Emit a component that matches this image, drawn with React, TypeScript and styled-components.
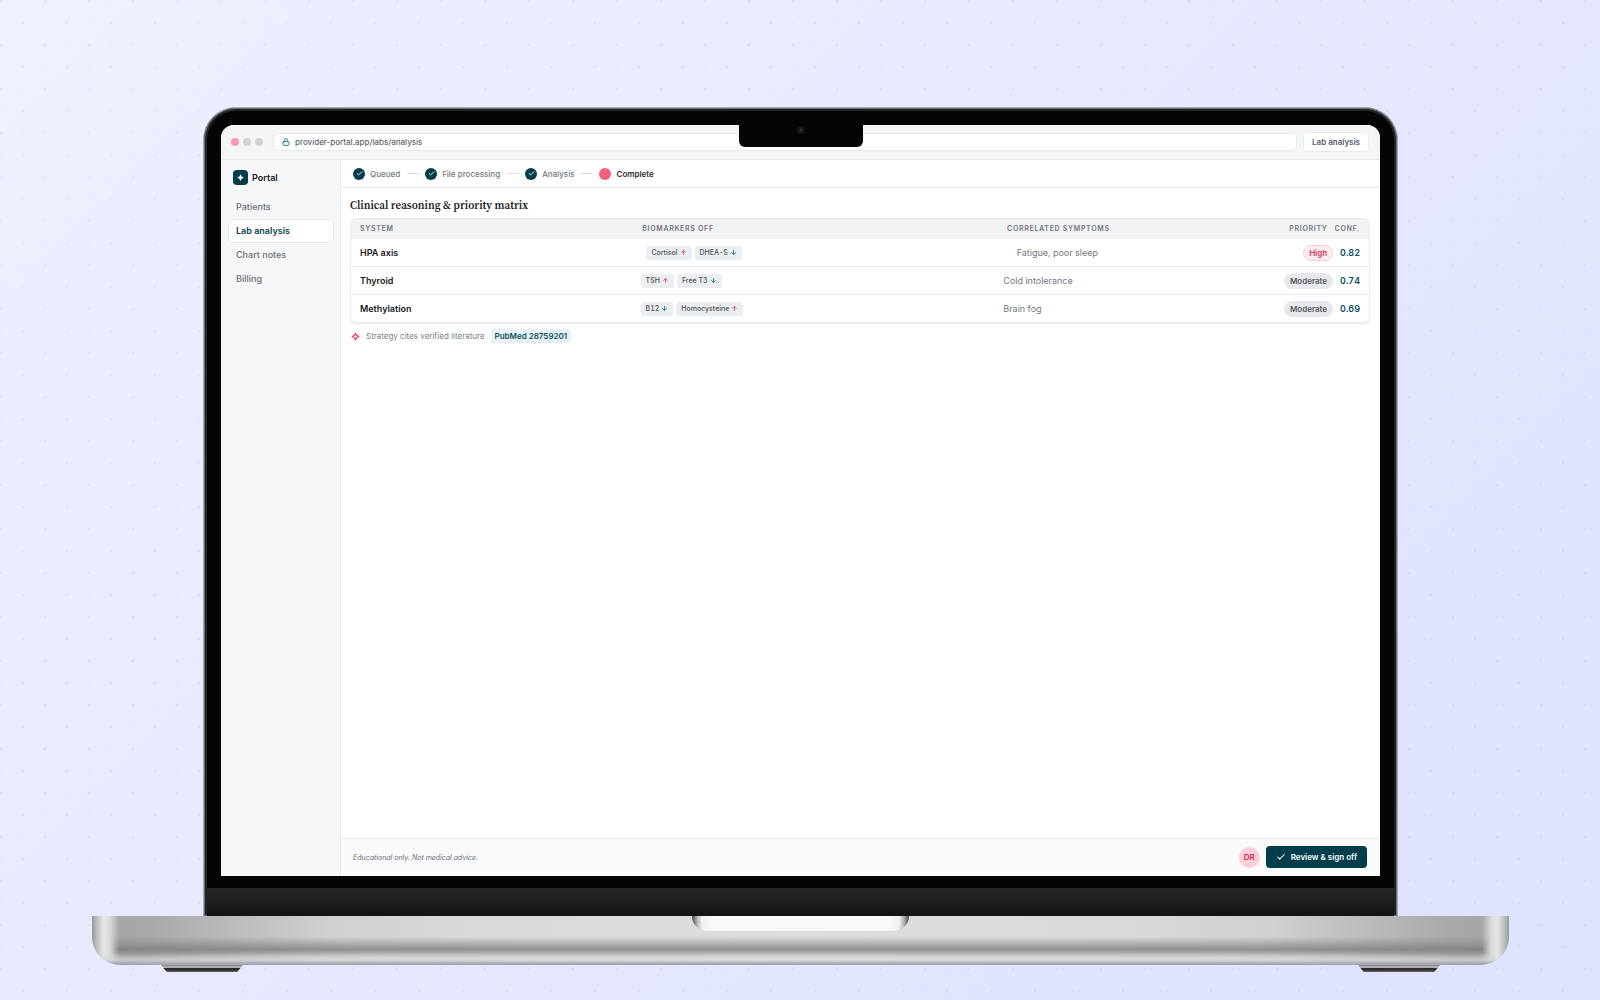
import React from "react";
import styled, { createGlobalStyle } from "styled-components";
import { ArrowDown, ArrowUp, Check, Lock } from "lucide-react";

const GlobalStyle = createGlobalStyle`
  *, *::before, *::after { box-sizing: border-box; }
  body {
    margin: 0;
    font-family: Inter, "Liberation Sans", sans-serif;
    color: #17191c;
    -webkit-font-smoothing: antialiased;
  }
  button, input { font: inherit; color: inherit; }
`;

const Stage = styled.div`
  min-height: 100vh;
  display: flex;
  flex-direction: column;
  padding: 107px 91px 28px 92px;
  background:
    radial-gradient(circle, rgba(96, 100, 130, 0.06) 1px, transparent 2px) -21px -21px / 44px 44px,
    radial-gradient(circle, rgba(96, 100, 130, 0.06) 1px, transparent 2px) 1px 1px / 44px 44px,
    radial-gradient(circle, rgba(96, 100, 130, 0.02) 1px, transparent 2px) -10px -10px / 22px 22px,
    linear-gradient(135deg, #eef1ff 0%, #e6e8ff 50%, #dee2ff 100%);
`;

const Lid = styled.div`
  flex: 1;
  display: flex;
  flex-direction: column;
  margin: 0 111px;
  border: 1px solid #a9aaad;
  border-bottom: 0;
  border-radius: 33px 33px 0 0;
  background: #050505;
  box-shadow: inset 0 0 0 1px #6c6d6f, inset 0 0 0 3px #222324;
  overflow: hidden;
`;

const Bezel = styled.div`
  flex: 1;
  display: flex;
  position: relative;
  padding: 17px 17px 12px;
`;

const Chin = styled.div`
  height: 28px;
  margin: 0 3px;
  background: linear-gradient(#262626, #131313);
`;

const Notch = styled.div`
  position: absolute;
  top: 16px;
  left: 50%;
  width: 124px;
  height: 23px;
  transform: translateX(-50%);
  display: flex;
  justify-content: center;
  padding-top: 2px;
  background: #050505;
  border-radius: 0 0 6px 6px;
`;

const Camera = styled.span`
  width: 8px;
  height: 8px;
  border-radius: 50%;
  background: radial-gradient(circle, #2c2f38 0 1px, #131417 2px 100%);
`;

const Screen = styled.div`
  flex: 1;
  display: flex;
  flex-direction: column;
  border-radius: 13px 13px 0 0;
  background: #ffffff;
  overflow: hidden;
`;

const BrowserBar = styled.header`
  display: flex;
  align-items: center;
  gap: 6px;
  height: 35px;
  padding: 0 11px 0 10px;
  background: #f3f5f6;
  border-bottom: 1px solid #e6e9eb;
`;

const Lights = styled.div`
  display: flex;
  gap: 4px;
  margin-right: 4px;
`;

const Light = styled.span<{ $color: string }>`
  width: 8px;
  height: 8px;
  border-radius: 50%;
  background: ${(p) => p.$color};
`;

const Address = styled.label`
  flex: 1;
  display: flex;
  align-items: center;
  gap: 5px;
  height: 18px;
  padding: 0 8px;
  background: #fff;
  border: 1px solid #e8ebed;
  border-radius: 5px;
  color: #2a7f8a;
`;

const AddressInput = styled.input`
  flex: 1;
  min-width: 0;
  padding: 0;
  border: 0;
  outline: 0;
  background: transparent;
  color: #62666c;
  font-size: 8px;
  font-weight: 500;
  line-height: 12px;
`;

const TabButton = styled.button`
  height: 20px;
  padding: 0 8px;
  background: #fff;
  border: 1px solid #e8ebed;
  border-radius: 5px;
  color: #55595f;
  font-size: 8px;
  font-weight: 600;
`;

const Workspace = styled.div`
  flex: 1;
  display: flex;
`;

const Sidebar = styled.aside`
  width: 120px;
  padding: 9px 6px 9px 7px;
  background: #f6f7f9;
  border-right: 1px solid #e9ebee;
`;

const Brand = styled.div`
  display: flex;
  align-items: center;
  gap: 4px;
  height: 16px;
  padding: 0 5px;
  margin-bottom: 10px;
  font-size: 9px;
  font-weight: 600;
`;

const BrandMark = styled.span`
  display: grid;
  place-items: center;
  width: 15px;
  height: 15px;
  border-radius: 4px;
  background: #003e4c;
`;

const Nav = styled.nav`
  display: grid;
`;

const NavLink = styled.a<{ $active?: boolean }>`
  height: 24px;
  padding: 0 7px;
  border: 1px solid ${(p) => (p.$active ? "#e6e9ec" : "transparent")};
  border-radius: 5px;
  background: ${(p) => (p.$active ? "#fff" : "transparent")};
  color: ${(p) => (p.$active ? "#0b3f50" : "#6a6e74")};
  font-size: 9px;
  font-weight: ${(p) => (p.$active ? 600 : 500)};
  line-height: 22px;
  text-decoration: none;
`;

const Main = styled.main`
  flex: 1;
  min-width: 0;
  display: flex;
  flex-direction: column;
`;

const Stepper = styled.ol`
  display: flex;
  align-items: center;
  gap: 7px;
  height: 28px;
  margin: 0;
  padding: 0 12px;
  list-style: none;
  border-bottom: 1px solid #e6e8eb;
`;

const Step = styled.li<{ $current?: boolean }>`
  display: flex;
  align-items: center;
  gap: 5px;
  color: ${(p) => (p.$current ? "#2b2e33" : "#74787e")};
  font-size: 8px;
  font-weight: ${(p) => (p.$current ? 600 : 500)};

  li + &::before {
    content: "";
    width: 12px;
    height: 1px;
    margin-right: 1px;
    background: #dcdfe2;
  }
`;

const StepDot = styled.span<{ $current?: boolean }>`
  display: grid;
  place-items: center;
  width: 12px;
  height: 12px;
  border-radius: 50%;
  background: ${(p) => (p.$current ? "#f2607b" : "#003e4c")};
  color: #fff;
`;

const Content = styled.section`
  flex: 1;
  padding: 10px 10px 9px 9px;
`;

const Title = styled.h1`
  margin: 0 0 4px;
  font-family: "Source Serif 4", "Source Serif Pro", "Liberation Serif", serif;
  font-size: 11px;
  font-weight: 600;
  line-height: 16px;
`;

const Matrix = styled.table`
  display: block;
  width: 100%;
  border: 1px solid #e8eaed;
  border-bottom-width: 2px;
  border-radius: 6px;
  overflow: hidden;

  thead, tbody { display: block; }
`;

const MatrixRow = styled.tr<{ $head?: boolean }>`
  display: grid;
  grid-template-columns: 1fr 1.3fr 1fr auto auto;
  align-items: center;
  gap: 7px;
  height: ${(p) => (p.$head ? 20 : 28)}px;
  padding: 0 9px;
  background: ${(p) => (p.$head ? "#f1f2f4" : "#fff")};

  tbody & { border-bottom: 1px solid #e8eaed; }
  tbody &:last-child { height: 27px; border-bottom: 0; }
`;

const HeadCell = styled.th`
  padding: 0;
  color: #73777d;
  font-size: 7px;
  font-weight: 600;
  line-height: 10px;
  letter-spacing: 0.1em;
  text-align: left;
  text-transform: uppercase;
`;

const SystemCell = styled.th`
  padding: 0;
  font-size: 9px;
  font-weight: 600;
  text-align: left;
`;

const Cell = styled.td<{ $score?: boolean }>`
  display: flex;
  align-items: center;
  gap: 3px;
  padding: 0;
  color: ${(p) => (p.$score ? "#0b5060" : "#74787e")};
  font-size: 9px;
  font-weight: ${(p) => (p.$score ? 600 : 400)};
  font-variant-numeric: tabular-nums;
`;

const Marker = styled.span<{ $up: boolean }>`
  display: flex;
  align-items: center;
  gap: 2px;
  height: 14px;
  padding: 0 5px;
  border-radius: 3px;
  background: #eceff1;
  color: #4e5257;
  font-size: 7px;
  font-weight: 500;

  svg { color: ${(p) => (p.$up ? "#e8456b" : "#1d7485")}; }
`;

const Priority = styled.span<{ $high: boolean }>`
  height: 16px;
  padding: 0 5px;
  border: 1px solid ${(p) => (p.$high ? "#fbccd6" : "#e6e8eb")};
  border-radius: 8px;
  background: ${(p) => (p.$high ? "#feecf0" : "#e6e8eb")};
  color: ${(p) => (p.$high ? "#d23459" : "#54585f")};
  font-size: 8px;
  font-weight: 600;
  line-height: 14px;
`;

const Citation = styled.p`
  display: flex;
  align-items: center;
  gap: 6px;
  margin: 5px 0 0;
  padding-left: 1px;
  color: #7a7e84;
  font-size: 8px;
  line-height: 14px;
`;

const Reference = styled.a`
  height: 14px;
  padding: 0 4px;
  border-radius: 3px;
  background: #e8f1f5;
  color: #0f5060;
  font-size: 8px;
  font-weight: 600;
  text-decoration: none;
`;

const Footer = styled.footer`
  display: flex;
  align-items: center;
  gap: 6px;
  height: 38px;
  padding: 0 13px 1px 12px;
  background: #fafafb;
  border-top: 1px solid #e6e8eb;
`;

const Disclaimer = styled.em`
  flex: 1;
  color: #6a6e74;
  font-size: 7px;
`;

const Avatar = styled.span`
  display: grid;
  place-items: center;
  width: 21px;
  height: 21px;
  border-radius: 50%;
  background: #fdcfd9;
  color: #d02a50;
  font-size: 8px;
  font-weight: 600;
`;

const SignOff = styled.button`
  display: flex;
  align-items: center;
  gap: 5px;
  height: 22px;
  padding: 0 10px;
  border: 0;
  border-radius: 4px;
  background: #003e4c;
  color: #fff;
  font-size: 8px;
  font-weight: 600;
`;

const Base = styled.div`
  display: flex;
  justify-content: center;
  align-items: flex-start;
  height: 49px;
  border-radius: 0 0 28px 28px;
  background:
    linear-gradient(to bottom, transparent 0 76%, rgba(214, 217, 215, 0.7) 90%, #a2a4ae 98%),
    linear-gradient(to right, #959a98 0, #bcc1bf 5px, #e4e7e6 12px, #d6d9d8 18px, rgba(160, 162, 162, 0) 27px),
    linear-gradient(to left, #959a98 0, #bcc1bf 5px, #e4e7e6 12px, #d6d9d8 18px, rgba(160, 162, 162, 0) 27px),
    linear-gradient(to bottom, transparent 42%, rgba(124, 126, 128, 0.8) 68%, transparent 86%),
    linear-gradient(to right, #a4a6a6 0, #a8aaaa 60px, #d0d2d2 240px, #d9dadb 400px, #dcdddd 50%, #d9dadb calc(100% - 400px), #d0d2d2 calc(100% - 240px), #a8aaaa calc(100% - 60px), #a4a6a6 100%);
`;

const Lip = styled.div`
  width: 217px;
  height: 15px;
  border-radius: 0 0 15px 15px;
  background: linear-gradient(to right, #454646 0, #b0b1b1 5px, #f0f0f0 10px, #f9f9f9 20px, #f9f9f9 calc(100% - 20px), #f0f0f0 calc(100% - 10px), #b0b1b1 calc(100% - 5px), #454646 100%);
`;

const Feet = styled.div`
  display: flex;
  justify-content: space-between;
  height: 7px;
  padding: 0 69px;
`;

const Foot = styled.span`
  width: 82px;
  background: linear-gradient(#85878a, #b8babb 35%, #2c2a2c 50%, #2c2a2c 70%, #6e6c70);
  clip-path: polygon(0 0, 100% 0, 93% 100%, 7% 100%);
`;

const steps = ["Queued", "File processing", "Analysis", "Complete"];
const sections = ["Patients", "Lab analysis", "Chart notes", "Billing"];
const columns = ["System", "Biomarkers off", "Correlated symptoms", "Priority", "Conf."];

const findings = [
  { system: "HPA axis", markers: [["Cortisol", true], ["DHEA-S", false]], symptoms: "Fatigue, poor sleep", priority: "High", score: "0.82" },
  { system: "Thyroid", markers: [["TSH", true], ["Free T3", false]], symptoms: "Cold intolerance", priority: "Moderate", score: "0.74" },
  { system: "Methylation", markers: [["B12", false], ["Homocysteine", true]], symptoms: "Brain fog", priority: "Moderate", score: "0.69" },
] as { system: string; markers: [string, boolean][]; symptoms: string; priority: string; score: string }[];

function StarIcon({ size, filled }: { size: number; filled?: boolean }) {
  return (
    <svg width={size} height={size} viewBox="0 0 16 16" aria-hidden="true">
      <path
        d="M8 2 10 6 14 8 10 10 8 14 6 10 2 8 6 6Z"
        fill={filled ? "#fff" : "none"}
        stroke={filled ? "none" : "#e8456b"}
        strokeWidth={2}
        strokeLinejoin="round"
      />
    </svg>
  );
}

export default function App() {
  return (
    <>
      <GlobalStyle />
      <Stage>
        <Lid>
          <Bezel>
            <Screen>
              <BrowserBar>
                <Lights>
                  <Light $color="#f79bb0" />
                  <Light $color="#d0d3d5" />
                  <Light $color="#d0d3d5" />
                </Lights>
                <Address>
                  <Lock size={8} strokeWidth={3} aria-hidden="true" />
                  <AddressInput aria-label="Address" defaultValue="provider-portal.app/labs/analysis" />
                </Address>
                <TabButton type="button">Lab analysis</TabButton>
              </BrowserBar>
              <Workspace>
                <Sidebar>
                  <Brand>
                    <BrandMark><StarIcon size={9} filled /></BrandMark>
                    Portal
                  </Brand>
                  <Nav>
                    {sections.map((name) => (
                      <NavLink key={name} href="#" $active={name === "Lab analysis"}>{name}</NavLink>
                    ))}
                  </Nav>
                </Sidebar>
                <Main>
                  <Stepper>
                    {steps.map((name) => {
                      const current = name === "Complete";
                      return (
                        <Step key={name} $current={current}>
                          <StepDot $current={current}>
                            {!current && <Check size={7} strokeWidth={3} />}
                          </StepDot>
                          {name}
                        </Step>
                      );
                    })}
                  </Stepper>
                  <Content>
                    <Title>Clinical reasoning &amp; priority matrix</Title>
                    <Matrix>
                      <thead>
                        <MatrixRow $head>
                          {columns.map((name) => (
                            <HeadCell key={name} scope="col">{name}</HeadCell>
                          ))}
                        </MatrixRow>
                      </thead>
                      <tbody>
                        {findings.map((row) => (
                          <MatrixRow key={row.system}>
                            <SystemCell scope="row">{row.system}</SystemCell>
                            <Cell>
                              {row.markers.map(([name, up]) => (
                                <Marker key={name} $up={up}>
                                  {name}
                                  {up ? <ArrowUp size={7} strokeWidth={3} /> : <ArrowDown size={7} strokeWidth={3} />}
                                </Marker>
                              ))}
                            </Cell>
                            <Cell>{row.symptoms}</Cell>
                            <Cell><Priority $high={row.priority === "High"}>{row.priority}</Priority></Cell>
                            <Cell $score>{row.score}</Cell>
                          </MatrixRow>
                        ))}
                      </tbody>
                    </Matrix>
                    <Citation>
                      <StarIcon size={9} />
                      Strategy cites verified literature
                      <Reference href="#">PubMed 28759201</Reference>
                    </Citation>
                  </Content>
                  <Footer>
                    <Disclaimer>Educational only. Not medical advice.</Disclaimer>
                    <Avatar>DR</Avatar>
                    <SignOff type="button">
                      <Check size={10} strokeWidth={2.5} />
                      Review &amp; sign off
                    </SignOff>
                  </Footer>
                </Main>
              </Workspace>
            </Screen>
            <Notch><Camera /></Notch>
          </Bezel>
          <Chin />
        </Lid>
        <Base><Lip /></Base>
        <Feet><Foot /><Foot /></Feet>
      </Stage>
    </>
  );
}
